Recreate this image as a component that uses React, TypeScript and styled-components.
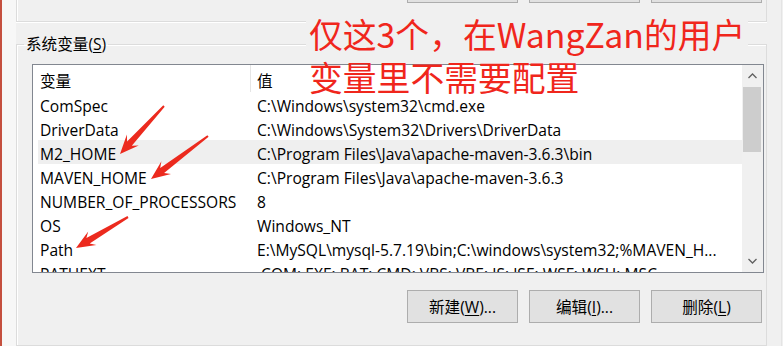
import React from "react";
import styled, { createGlobalStyle } from "styled-components";

const Global = createGlobalStyle`
  html, body { margin: 0; padding: 0; background: #f0f0f0; }
  * { box-sizing: border-box; }
`;

const FONT = `"Open Sans", "Noto Sans CJK SC", sans-serif`;

const Page = styled.div`
  position: relative;
  width: 783px;
  height: 346px;
  overflow: hidden;
  display: flex;
  background: #f0f0f0;
  font-family: ${FONT};
  font-size: 15.6px;
  color: #000;
`;

const EdgeRed = styled.div`
  width: 2px;
  background: #c5503f;
`;

const EdgeLight = styled.div`
  width: 14px;
  background: #f7f7f7;
`;

const Main = styled.div`
  width: 751px;
  display: flex;
  flex-direction: column;
`;

const PrevGroup = styled.div`
  height: 22px;
  border: 1px solid #dcdcdc;
  border-top: none;
  box-shadow: inset 1px 0 0 #fff, 0 1px 0 #fff;
  padding-right: 4px;
`;

const ButtonRow = styled.div`
  display: flex;
  justify-content: flex-end;
  gap: 11px;
`;

const ButtonStub = styled.div`
  width: 111px;
  height: 3px;
  background: #e1e1e1;
  border: 1px solid #adadad;
  border-top: none;
`;

const Group = styled.fieldset`
  margin: 12px 0 0 0;
  padding: 0 2px 0 15px;
  border: 1px solid #dcdcdc;
  box-shadow: inset 1px 1px 0 #fff;
  height: 312px;
  min-width: 0;
`;

const Legend = styled.legend`
  margin-left: -8px;
  padding: 0 2px;
  line-height: 20px;
  font-size: 15.6px;
`;

const Key = styled.span`
  text-decoration: underline;
  text-underline-offset: 2px;
`;

const ListBox = styled.div`
  margin-top: 10px;
  height: 209px;
  border: 1px solid #828790;
  background: #fff;
  display: flex;
`;

const ListContent = styled.div`
  flex: 1;
  min-width: 0;
  overflow: hidden;
`;

const HeaderRow = styled.div`
  height: 27px;
  display: grid;
  grid-template-columns: 218px 1fr;
  align-items: center;
`;

const HeaderCell = styled.div<{ $divider?: boolean }>`
  height: 100%;
  display: flex;
  align-items: center;
  padding-top: 3px;
  padding-left: ${(p) => (p.$divider ? "7px" : "6px")};
  border-right: ${(p) => (p.$divider ? "1px solid #e5e5e5" : "none")};
`;

const Row = styled.div<{ $selected?: boolean }>`
  margin-left: 5px;
  height: 24px;
  padding-top: 3px;
  display: grid;
  grid-template-columns: 213px 1fr;
  align-items: center;
  background: ${(p) => (p.$selected ? "#efefef" : "transparent")};
  white-space: nowrap;
`;

const NameCell = styled.div`
  padding-left: 2px;
  overflow: hidden;
`;

const ValueCell = styled.div`
  padding-left: 6px;
  overflow: hidden;
`;

const Scrollbar = styled.div`
  width: 21px;
  background: #f0f0f0;
  display: flex;
  flex-direction: column;
`;

const ScrollArrow = styled.div`
  height: 22px;
  display: flex;
  align-items: center;
  justify-content: center;
`;

const Thumb = styled.div`
  margin: 0 2px 0 1px;
  height: 65px;
  background: #cdcdcd;
`;

const Track = styled.div`
  flex: 1;
`;

const BottomButtons = styled(ButtonRow)`
  margin-top: 17px;
  padding-right: 2px;
`;

const Button = styled.button`
  width: 111px;
  height: 33px;
  background: #e1e1e1;
  border: 1px solid #adadad;
  font-family: ${FONT};
  font-size: 15.6px;
  color: #000;
  padding: 0;
`;

const RightArea = styled.div`
  flex: 1;
  border-right: 1px solid #e4e4e4;
  margin-right: 1px;
`;

const Annotation = styled.div`
  position: absolute;
  left: 306px;
  top: 12px;
  font-family: "Noto Sans CJK SC", sans-serif;
  font-size: 33.8px;
  line-height: 43px;
  color: #f0261c;
`;

const AnnLine = styled.div<{ $bg?: boolean }>`
  display: table;
  padding: 0 3px;
  background: ${(p) => (p.$bg ? "#f0f0f0" : "transparent")};
`;

const ArrowLayer = styled.svg`
  position: absolute;
  left: 0;
  top: 0;
  pointer-events: none;
`;

type P = [number, number];
function arrowPoints(tail: P, tip: P): string {
  const dx = tip[0] - tail[0];
  const dy = tip[1] - tail[1];
  const len = Math.hypot(dx, dy);
  const ux = dx / len, uy = dy / len;
  const nx = -uy, ny = ux;
  const headLen = 19, headHalf = 8, notch = 5, tailHalf = 1, neckHalf = 3.2;
  const at = (along: number, side: number): string => {
    const x = tip[0] - ux * along + nx * side;
    const y = tip[1] - uy * along + ny * side;
    return `${x.toFixed(1)},${y.toFixed(1)}`;
  };
  return [
    at(len, tailHalf),
    at(headLen - notch, neckHalf),
    at(headLen, headHalf),
    at(0, 0),
    at(headLen, -headHalf),
    at(headLen - notch, -neckHalf),
    at(len, -tailHalf),
  ].join(" ");
}

const arrows: [P, P][] = [
  [[164, 106], [120, 154]],
  [[208, 136], [151, 179]],
  [[128, 217], [76, 248]],
];

const rows: { name: string; value: string; selected?: boolean }[] = [
  { name: "ComSpec", value: "C:\\Windows\\system32\\cmd.exe" },
  { name: "DriverData", value: "C:\\Windows\\System32\\Drivers\\DriverData" },
  { name: "M2_HOME", value: "C:\\Program Files\\Java\\apache-maven-3.6.3\\bin", selected: true },
  { name: "MAVEN_HOME", value: "C:\\Program Files\\Java\\apache-maven-3.6.3" },
  { name: "NUMBER_OF_PROCESSORS", value: "8" },
  { name: "OS", value: "Windows_NT" },
  { name: "Path", value: "E:\\MySQL\\mysql-5.7.19\\bin;C:\\windows\\system32;%MAVEN_H..." },
  { name: "PATHEXT", value: ".COM;.EXE;.BAT;.CMD;.VBS;.VBE;.JS;.JSE;.WSF;.WSH;.MSC" },
];

const Chevron = ({ up }: { up?: boolean }) => (
  <svg width="9" height="6" viewBox="0 0 9 6">
    <polyline
      points={up ? "0.5,5 4.5,1 8.5,5" : "0.5,1 4.5,5 8.5,1"}
      fill="none"
      stroke="#606060"
      strokeWidth="1.3"
    />
  </svg>
);

export default function App() {
  return (
    <>
      <Global />
      <Page>
        <EdgeRed />
        <EdgeLight />
        <Main>
          <PrevGroup>
            <ButtonRow>
              <ButtonStub />
              <ButtonStub />
              <ButtonStub />
            </ButtonRow>
          </PrevGroup>
          <Group>
            <Legend>
              系统变量(<Key>S</Key>)
            </Legend>
            <ListBox>
              <ListContent>
                <HeaderRow>
                  <HeaderCell $divider>变量</HeaderCell>
                  <HeaderCell>值</HeaderCell>
                </HeaderRow>
                {rows.map((r) => (
                  <Row key={r.name} $selected={r.selected}>
                    <NameCell>{r.name}</NameCell>
                    <ValueCell>{r.value}</ValueCell>
                  </Row>
                ))}
              </ListContent>
              <Scrollbar>
                <ScrollArrow>
                  <Chevron up />
                </ScrollArrow>
                <Thumb />
                <Track />
                <ScrollArrow>
                  <Chevron />
                </ScrollArrow>
              </Scrollbar>
            </ListBox>
            <BottomButtons>
              <Button>
                新建(<Key>W</Key>)...
              </Button>
              <Button>
                编辑(<Key>I</Key>)...
              </Button>
              <Button>
                删除(<Key>L</Key>)
              </Button>
            </BottomButtons>
          </Group>
        </Main>
        <RightArea />
        <Annotation>
          <AnnLine $bg>仅这3个，在WangZan的用户</AnnLine>
          <AnnLine>变量里不需要配置</AnnLine>
        </Annotation>
        <ArrowLayer width="783" height="346">
          {arrows.map(([t, h], i) => (
            <polygon key={i} points={arrowPoints(t, h)} fill="#ec2a1e" />
          ))}
        </ArrowLayer>
      </Page>
    </>
  );
}
